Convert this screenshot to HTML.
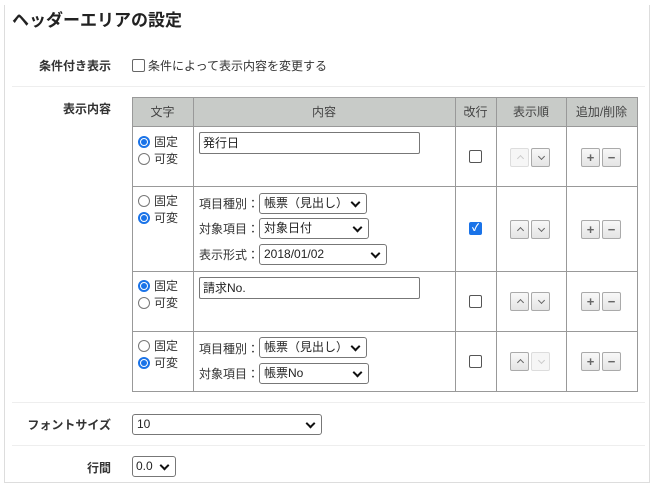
<!DOCTYPE html>
<html><head><meta charset="utf-8"><style>
*{box-sizing:border-box;margin:0;padding:0}
body{width:657px;height:488px;background:#fff;font-family:"Liberation Sans","Noto Sans CJK JP",sans-serif;color:#333;font-size:12px;position:relative;overflow:hidden}
.a{position:absolute}
.panel{left:4px;top:5px;width:646px;height:478px;border:1px solid #ddd;border-top:none}
h1{position:absolute;left:12px;top:6px;font-size:17px;font-weight:bold;color:#222}
.hr{position:absolute;left:12px;width:633px;height:1px;background:#eee}
.lbl{position:absolute;right:546px;font-weight:bold;font-size:12px;color:#333;white-space:nowrap}
.v{position:absolute;background:#999;width:1px}
.h{position:absolute;background:#999;height:1px}
.th{position:absolute;top:98px;height:28px;line-height:28px;text-align:center;color:#444;font-size:12px}
.sel{position:absolute;border:1px solid #777;border-radius:3px;height:21px;line-height:19px;padding-left:4px;font-size:12px;color:#222;background:#fff}
.sel:after{content:"";position:absolute;right:7px;top:5px;width:5px;height:5px;border-right:2px solid #111;border-bottom:2px solid #111;transform:rotate(45deg)}
.inp{position:absolute;border:1px solid #777;border-radius:2px;height:22px;line-height:20px;padding-left:3px;width:221px;left:199px;font-size:12px;color:#222}
.rad{position:absolute;width:12px;height:12px;border-radius:50%;border:1px solid #777;background:#fff}
.rad.on{border:2px solid #1a73e8;background:#fff}
.rad.on:after{content:"";position:absolute;left:1px;top:1px;width:6px;height:6px;border-radius:50%;background:#1a73e8}
.rt{position:absolute;font-size:12px;color:#333}
.cb{position:absolute;width:13px;height:13px;border:1px solid #555;border-radius:2px;background:#fff}
.btn{position:absolute;width:19px;height:19px;border:1px solid #aaa;border-radius:2px;background:linear-gradient(#f8f8f8,#e4e4e4);color:#666;text-align:center;font-size:13px;line-height:17px;font-weight:bold}
.btn.dis{border-color:#ddd;background:#f6f6f6;color:#ccc}
.up:after,.dn:after{content:"";position:absolute;left:7px;width:4px;height:4px;border-left:1.5px solid #666;border-top:1.5px solid #666}
.up:after{top:7px;transform:rotate(45deg)}
.dn:after{top:5px;transform:rotate(225deg)}
.dis.up:after,.dis.dn:after{border-color:#ccc}
.k{position:absolute;font-size:12px;color:#333;left:199px}
</style></head><body>
<div class="a panel"></div>
<h1>ヘッダーエリアの設定</h1>
<div class="lbl" style="top:57px">条件付き表示</div>
<div class="cb" style="left:132px;top:59px;border-color:#666"></div>
<div class="rt" style="left:148px;top:57px">条件によって表示内容を変更する</div>
<div class="hr" style="top:86px"></div>
<div class="lbl" style="top:100px">表示内容</div>

<div class="a" style="left:132px;top:97px;width:506px;height:29px;background:#c8cbc8"></div>
<div class="th" style="left:132px;width:61px">文字</div>
<div class="th" style="left:193px;width:262px">内容</div>
<div class="th" style="left:455px;width:41px">改行</div>
<div class="th" style="left:496px;width:70px">表示順</div>
<div class="th" style="left:566px;width:71px">追加/削除</div>
<div class="h" style="left:132px;top:97px;width:506px"></div>
<div class="h" style="left:132px;top:126px;width:506px"></div>
<div class="h" style="left:132px;top:186px;width:506px"></div>
<div class="h" style="left:132px;top:271px;width:506px"></div>
<div class="h" style="left:132px;top:331px;width:506px"></div>
<div class="h" style="left:132px;top:391px;width:506px"></div>
<div class="v" style="left:132px;top:97px;height:295px"></div>
<div class="v" style="left:193px;top:97px;height:295px"></div>
<div class="v" style="left:455px;top:97px;height:295px"></div>
<div class="v" style="left:496px;top:97px;height:295px"></div>
<div class="v" style="left:566px;top:97px;height:295px"></div>
<div class="v" style="left:637px;top:97px;height:295px"></div>

<div class="rad on" style="left:138px;top:136px"></div><div class="rt" style="left:154px;top:133px">固定</div>
<div class="rad" style="left:138px;top:153px"></div><div class="rt" style="left:154px;top:150px">可変</div>
<div class="inp" style="top:132px">発行日</div>
<div class="cb" style="left:469px;top:150px"></div>
<div class="btn dis up" style="left:510px;top:148px"></div><div class="btn dn" style="left:531px;top:148px"></div>
<div class="btn" style="left:581px;top:148px">+</div><div class="btn" style="left:602px;top:148px">−</div>

<div class="rad" style="left:138px;top:195px"></div><div class="rt" style="left:154px;top:192px">固定</div>
<div class="rad on" style="left:138px;top:212px"></div><div class="rt" style="left:154px;top:209px">可変</div>
<div class="k" style="top:195px">項目種別：</div><div class="sel" style="left:259px;top:193px;width:108px">帳票（見出し）</div>
<div class="k" style="top:220px">対象項目：</div><div class="sel" style="left:259px;top:218px;width:110px">対象日付</div>
<div class="k" style="top:246px">表示形式：</div><div class="sel" style="left:259px;top:244px;width:128px">2018/01/02</div>
<div class="cb" style="left:469px;top:222px;background:#1a73e8;border-color:#1a73e8;color:#fff;font-size:10px;line-height:11px;text-align:center;font-weight:bold">✓</div>
<div class="btn up" style="left:510px;top:220px"></div><div class="btn dn" style="left:531px;top:220px"></div>
<div class="btn" style="left:581px;top:220px">+</div><div class="btn" style="left:602px;top:220px">−</div>

<div class="rad on" style="left:138px;top:280px"></div><div class="rt" style="left:154px;top:277px">固定</div>
<div class="rad" style="left:138px;top:297px"></div><div class="rt" style="left:154px;top:294px">可変</div>
<div class="inp" style="top:277px">請求No.</div>
<div class="cb" style="left:469px;top:295px"></div>
<div class="btn up" style="left:510px;top:292px"></div><div class="btn dn" style="left:531px;top:292px"></div>
<div class="btn" style="left:581px;top:292px">+</div><div class="btn" style="left:602px;top:292px">−</div>

<div class="rad" style="left:138px;top:340px"></div><div class="rt" style="left:154px;top:337px">固定</div>
<div class="rad on" style="left:138px;top:357px"></div><div class="rt" style="left:154px;top:354px">可変</div>
<div class="k" style="top:340px">項目種別：</div><div class="sel" style="left:259px;top:337px;width:108px">帳票（見出し）</div>
<div class="k" style="top:365px">対象項目：</div><div class="sel" style="left:259px;top:363px;width:110px">帳票No</div>
<div class="cb" style="left:469px;top:355px"></div>
<div class="btn up" style="left:510px;top:352px"></div><div class="btn dis dn" style="left:531px;top:352px"></div>
<div class="btn" style="left:581px;top:352px">+</div><div class="btn" style="left:602px;top:352px">−</div>

<div class="hr" style="top:402px"></div>
<div class="lbl" style="top:416px">フォントサイズ</div>
<div class="sel" style="left:132px;top:414px;width:190px">10</div>
<div class="hr" style="top:445px"></div>
<div class="lbl" style="top:459px">行間</div>
<div class="sel" style="left:132px;top:456px;width:44px;padding-left:3px">0.0</div>
</body></html>
